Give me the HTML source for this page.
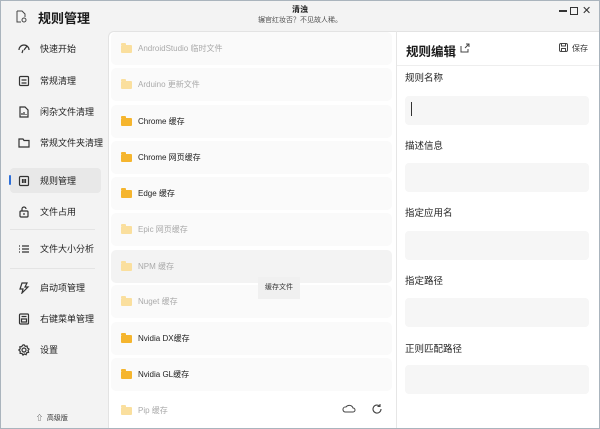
<!DOCTYPE html>
<html><head><meta charset="utf-8"><style>
*{margin:0;padding:0;box-sizing:border-box}
body{width:600px;height:429px;overflow:hidden;background:#f3f3f3;font-family:"Liberation Sans","Noto Sans CJK SC",sans-serif;position:relative;color:#1a1a1a}
.win{position:absolute;left:0;top:0;width:600px;height:429px;border:1px solid #aab4bd;}
.abs{position:absolute}
.nav{position:absolute;left:18px;font-size:9px;color:#222;display:flex;align-items:center}
.nav svg{width:12px;height:12px;margin-right:10px;fill:none;stroke:#333;stroke-width:1.2}
.main{position:absolute;left:108px;top:31px;width:491px;height:397px;background:#fff;border-left:1px solid #e3e3e3;border-top:1px solid #e3e3e3;border-top-left-radius:6px}
.row{position:absolute;left:111px;width:281px;height:33px;background:#fafafa;border-radius:5px;font-size:8px;display:flex;align-items:center;padding-left:10px;color:#222}
.row.d{color:#aaa}
.row i{display:inline-block;width:11px;height:8px;background:#f5b52e;border-radius:1px;margin-right:6px;position:relative}
.row.d i{background:#fadf9e}
.row i:before{content:"";position:absolute;left:0;top:-1.5px;width:5px;height:2px;background:inherit;border-radius:1px 1px 0 0}
.lab{position:absolute;left:405px;font-size:9.5px;color:#222}
.inp{position:absolute;left:405px;width:184px;height:29px;background:#f6f6f6;border-radius:4px}
</style></head><body>
<div class="win"></div>
<svg class="abs" style="left:16px;top:10px" width="11" height="13" viewBox="0 0 11 13" fill="none" stroke="#444" stroke-width="1"><path d="M1 1h5l3 3v3M1 1v11h4"/><circle cx="8" cy="10" r="2"/></svg>
<div class="abs" style="left:38px;top:8px;font-size:13px;font-weight:bold">规则管理</div>
<div class="abs" style="left:0;width:600px;top:4px;text-align:center;font-size:8px;font-weight:bold">清浊</div>
<div class="abs" style="left:0;width:600px;top:15px;text-align:center;font-size:7px;color:#555">辗官红妆否？不见故人稀。</div>
<div class="abs" style="left:559px;top:10px;width:8px;height:1.5px;background:#333"></div>
<div class="abs" style="left:570px;top:7px;width:8px;height:8px;border:1.5px solid #333"></div>
<div class="abs" style="left:582px;top:4px;font-size:11px;color:#333">✕</div>

<div class="abs" style="left:10px;top:168px;width:91px;height:25px;background:#e8e8e8;border-radius:4px"></div>
<div class="abs" style="left:9px;top:175px;width:2px;height:10px;background:#2e6fd8;border-radius:1px"></div>
<div class="abs" style="left:10px;top:229px;width:85px;height:1px;background:#e4e4e4"></div>
<div class="abs" style="left:10px;top:268px;width:85px;height:1px;background:#e4e4e4"></div>

<div class="nav" style="top:42px"><svg viewBox="0 0 12 12"><path d="M1 7a5 5 0 0 1 10 0M6 7l3-4M4 10l1-3"/></svg>快速开始</div>
<div class="nav" style="top:74px"><svg viewBox="0 0 12 12"><rect x="1.5" y="1.5" width="9" height="9" rx="1"/><path d="M3.5 5h5M3.5 8h5"/></svg>常规清理</div>
<div class="nav" style="top:105px"><svg viewBox="0 0 12 12"><path d="M2 1h5l3 3v7H2z M4 9V7M6 9V6M8 9V8"/></svg>闲杂文件清理</div>
<div class="nav" style="top:136px"><svg viewBox="0 0 12 12"><path d="M1 2h4l1 1.5h5V10H1z"/></svg>常规文件夹清理</div>
<div class="nav" style="top:174px"><svg viewBox="0 0 12 12"><rect x="1.5" y="1.5" width="9" height="9" rx="1"/><path d="M4.5 4v4M6 4v4M7.5 4v4"/></svg>规则管理</div>
<div class="nav" style="top:205px"><svg viewBox="0 0 12 12"><rect x="2" y="5" width="8" height="6" rx="1"/><path d="M4 5V3a2 2 0 0 1 4 0M6 7v2"/></svg>文件占用</div>
<div class="nav" style="top:242px"><svg viewBox="0 0 12 12"><path d="M1 3h1M4 3h7M1 6h1M4 6h7M1 9h1M4 9h7"/></svg>文件大小分析</div>
<div class="nav" style="top:281px"><svg viewBox="0 0 12 12"><path d="M4 1h5L7 5h3L4 11l1-4H2z"/></svg>启动项管理</div>
<div class="nav" style="top:312px"><svg viewBox="0 0 12 12"><rect x="1.5" y="1" width="9" height="10" rx="1"/><path d="M3.5 3.5h5M3.5 6h5v3h-5z"/></svg>右键菜单管理</div>
<div class="nav" style="top:343px"><svg viewBox="0 0 12 12"><circle cx="6" cy="6" r="2"/><path d="M6 .8l1.2 1.5 1.9-.3.3 1.9L11 5.1 10 6.5l.6 1.8-1.9.5-.6 1.9-1.8-.7L5 11.1l-1-1.6-1.9-.2.1-1.9L.8 6l1.4-1.2-.4-1.9 1.9-.3L4.8 1z"/></svg>设置</div>
<div class="abs" style="left:36px;top:413px;font-size:7px;color:#333">⇧&nbsp;&nbsp;高级版</div>

<div class="main"></div>
<div class="row d" style="top:32px"><i></i>AndroidStudio 临时文件</div>
<div class="row d" style="top:68px"><i></i>Arduino 更新文件</div>
<div class="row" style="top:105px"><i></i>Chrome 缓存</div>
<div class="row" style="top:141px"><i></i>Chrome 网页缓存</div>
<div class="row" style="top:177px"><i></i>Edge 缓存</div>
<div class="row d" style="top:213px"><i></i>Epic 网页缓存</div>
<div class="row d" style="top:250px;background:#f3f3f3"><i></i>NPM 缓存</div>
<div class="row d" style="top:285px"><i></i>Nuget 缓存</div>
<div class="row" style="top:322px"><i></i>Nvidia DX缓存</div>
<div class="row" style="top:358px"><i></i>Nvidia GL缓存</div>
<div class="row d" style="top:394px;background:#fff"><i></i>Pip 缓存</div>
<div class="abs" style="left:258px;top:277px;width:42px;height:22px;background:#f0f0f0;font-size:7px;color:#333;text-align:center;line-height:22px">缓存文件</div>
<svg class="abs" style="left:342px;top:404px" width="14" height="10" viewBox="0 0 14 10" fill="none" stroke="#444" stroke-width="1"><path d="M3 8h8a2 2 0 0 0 0-4 4 4 0 0 0-7-1A2.5 2.5 0 0 0 3 8z"/></svg>
<svg class="abs" style="left:371px;top:403px" width="12" height="12" viewBox="0 0 12 12" fill="none" stroke="#444" stroke-width="1.1"><path d="M10 6a4 4 0 1 1-1.2-2.8M9 1v2.5H6.5"/></svg>

<div class="abs" style="left:396px;top:31px;width:1px;height:397px;background:#e6e6e6"></div>
<div class="abs" style="left:397px;top:65px;width:202px;height:1px;background:#eee"></div>
<div class="abs" style="left:406px;top:41px;font-size:12.5px;font-weight:bold">规则编辑</div>
<svg class="abs" style="left:460px;top:43px" width="10" height="10" viewBox="0 0 10 10" fill="none" stroke="#444" stroke-width="1"><path d="M1 3v6h7V6M5 5l4-4M6 1h3v3"/></svg>
<svg class="abs" style="left:559px;top:43px" width="9" height="9" viewBox="0 0 9 9" fill="none" stroke="#444" stroke-width="1"><rect x=".5" y=".5" width="8" height="8" rx="1.5"/><path d="M2.5 .5v2.5h4V.5M2.5 8.5v-3h4v3"/></svg>
<div class="abs" style="left:572px;top:43px;font-size:8px;color:#333">保存</div>

<div class="lab" style="top:70px">规则名称</div>
<div class="inp" style="top:96px"></div>
<div class="abs" style="left:411px;top:102px;width:1px;height:14px;background:#333"></div>
<div class="lab" style="top:138px">描述信息</div>
<div class="inp" style="top:163px"></div>
<div class="lab" style="top:205px">指定应用名</div>
<div class="inp" style="top:231px"></div>
<div class="lab" style="top:273px">指定路径</div>
<div class="inp" style="top:298px"></div>
<div class="lab" style="top:341px">正则匹配路径</div>
<div class="inp" style="top:365px"></div>
</body></html>
